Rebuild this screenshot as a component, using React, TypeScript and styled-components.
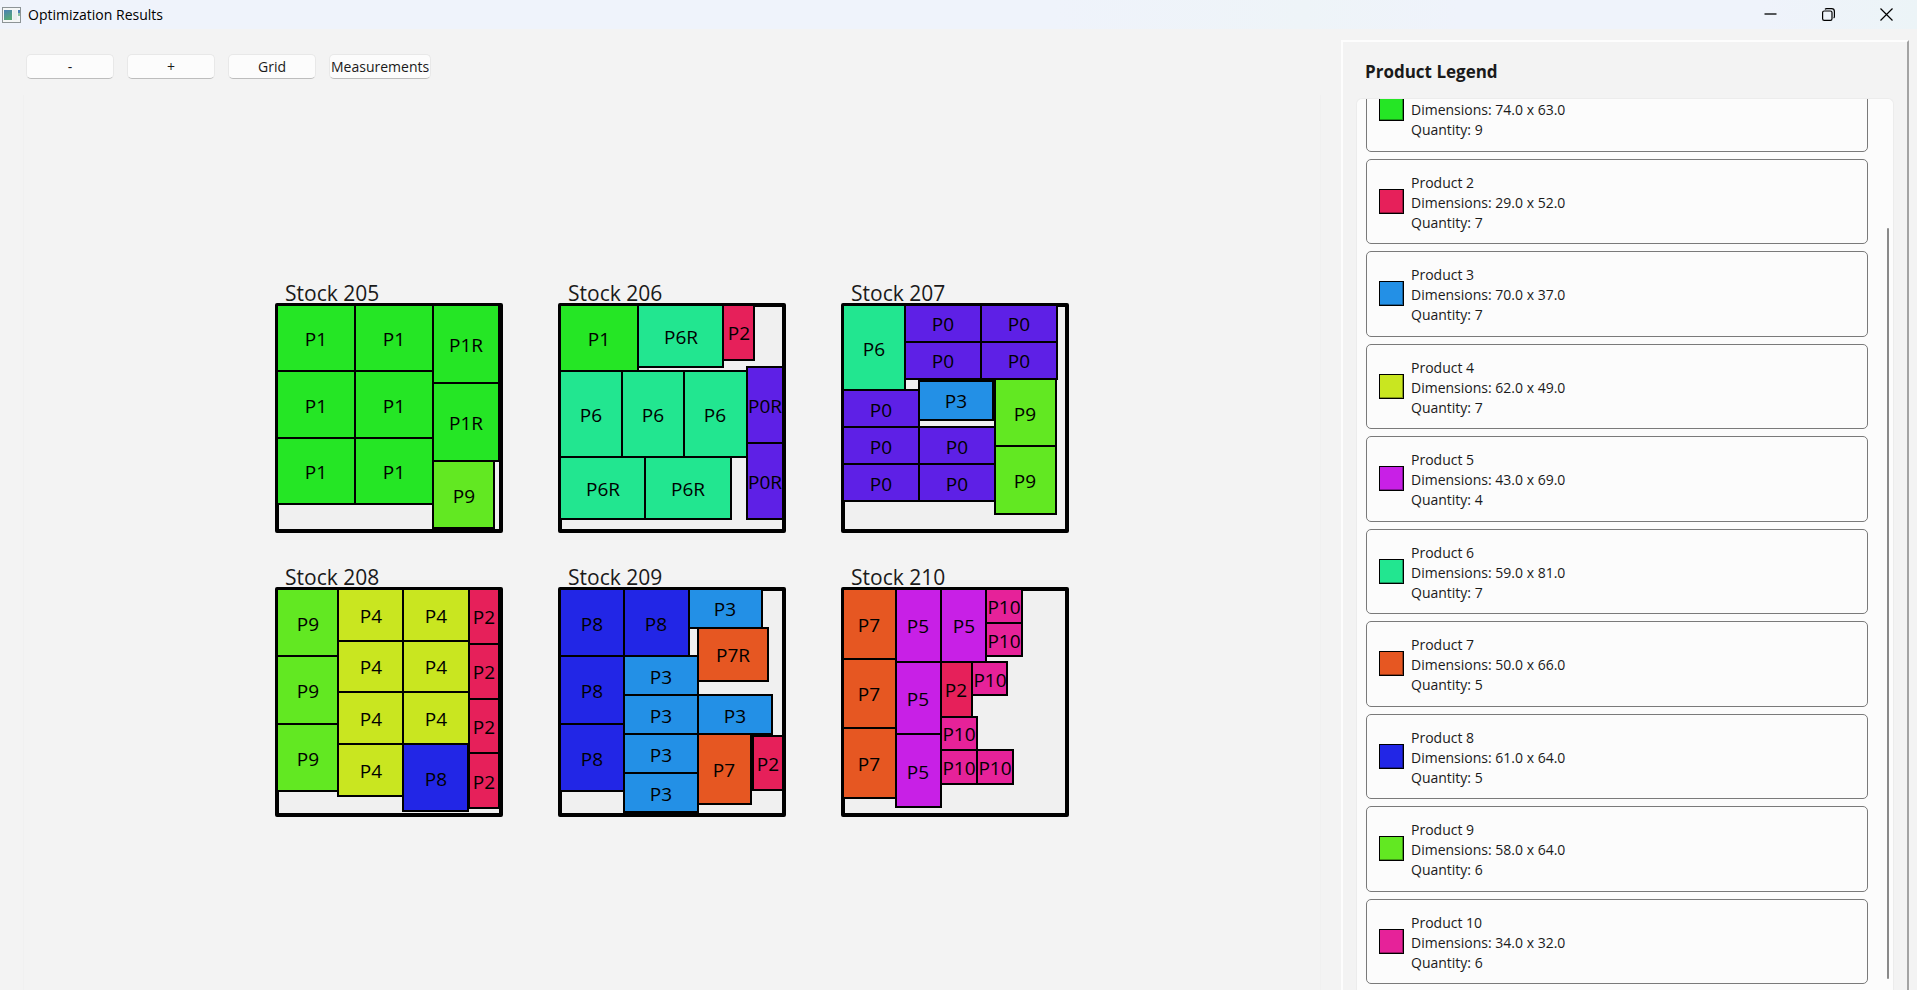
import React from "react";
import styled, { createGlobalStyle } from "styled-components";

const Global = createGlobalStyle`
  *, *::before, *::after { box-sizing: border-box; }
  body {
    margin: 0;
    background: #f3f3f3;
    color: #1a1a1a;
    font-family: "Open Sans", "Noto Sans", sans-serif;
    font-size: 14px;
  }
`;

const Window = styled.div`
  display: flex;
  flex-direction: column;
  height: 100vh;
  overflow: hidden;
`;

const TitleBar = styled.header`
  display: flex;
  align-items: center;
  flex: none;
  height: 29px;
  padding: 0 2px;
  background: linear-gradient(90deg, #eff3fb 0%, #eff3fb 55%, #eef4f8 68%, #eff3fb 76%, #eff3fb 92%, #ecf4f7 100%);
`;

const WindowTitle = styled.h1`
  flex: 1;
  margin: 0 0 0 7px;
  color: #000;
  font-size: 14px;
  font-weight: 400;
  line-height: 20px;
`;

const WindowButton = styled.button`
  display: flex;
  align-items: center;
  justify-content: center;
  width: 58px;
  height: 29px;
  padding: 0;
  border: 0;
  background: transparent;
`;

const Body = styled.div`
  display: flex;
  flex: 1;
  gap: 20px;
  min-height: 0;
  padding: 11px 8px 0 23px;
`;

const Workspace = styled.main`
  display: flex;
  flex: 1;
  flex-direction: column;
  gap: 16px;
  min-width: 0;
  padding-top: 14px;
`;

const Toolbar = styled.div`
  display: flex;
  gap: 13px;
  padding-left: 3px;
`;

const ToolButton = styled.button`
  min-width: 88px;
  height: 25px;
  padding: 1px 1px 0;
  border: 1px solid #e8e8e8;
  border-bottom-color: #bdbdbd;
  border-radius: 5px;
  background: #fcfcfc;
  color: #1a1a1a;
  font: inherit;
  line-height: 20px;
`;

const Canvas = styled.section`
  display: flex;
  flex: 1;
  align-items: center;
  justify-content: center;
  min-height: 0;
  padding-top: 4px;
  border: 1px solid #f0f0f0;
  border-width: 0 1px;
`;

const StockGrid = styled.div`
  display: grid;
  grid-template-columns: repeat(3, auto);
  gap: 28px 59px;
`;

const Stock = styled.figure`
  margin: 0;
`;

const StockName = styled.figcaption`
  height: 30px;
  padding-left: 8px;
  font-size: 21px;
  line-height: 36px;
`;

const Sheet = styled.svg`
  display: block;
  overflow: visible;
`;

const SheetOutline = styled.rect`
  fill: #f0f0f0;
  stroke: #000;
  stroke-width: 4px;
  stroke-linejoin: round;
`;

const Piece = styled.rect`
  stroke: #000;
  stroke-width: 2px;
`;

const PieceName = styled.text`
  fill: #000;
  font-size: 19px;
  text-anchor: middle;
`;

const Legend = styled.aside`
  display: flex;
  flex-direction: column;
  flex: none;
  width: 568px;
  max-width: 40%;
  padding: 18px 13px 0;
  border-top: 2px solid #fdfdfd;
  border-left: 2px solid #fdfdfd;
  border-right: 2px solid #a3a3a3;
`;

const LegendTitle = styled.h2`
  margin: 0 0 14px 9px;
  font-size: 17px;
  font-weight: 700;
  line-height: 24px;
`;

const LegendView = styled.div`
  display: flex;
  flex: 1;
  align-items: flex-end;
  gap: 19px;
  min-height: 0;
  padding: 0 4px 6px 9px;
  border: 1px solid #ececec;
  border-bottom: 0;
  border-radius: 6px 6px 0 0;
  background: #fcfcfc;
  overflow: hidden;
`;

const LegendList = styled.ul`
  display: grid;
  flex: 1;
  grid-auto-rows: 1fr;
  gap: 7px;
  min-height: 918px;
  margin: 0;
  padding: 0;
  list-style: none;
`;

const LegendCard = styled.li`
  display: flex;
  align-items: center;
  gap: 7px;
  padding: 0 12px;
  border: 1px solid #7a7a7a;
  border-radius: 5px;
`;

const Swatch = styled.span<{ $color: string }>`
  width: 25px;
  height: 25px;
  border: 1px solid #000;
  background: ${(p) => p.$color};
  box-shadow: inset -1px -1px 0 rgba(0, 0, 0, 0.35);
`;

const Details = styled.p`
  margin: 0;
  padding-top: 3px;
  line-height: 20px;
`;

const Line = styled.span<{ $scrolledOut?: boolean }>`
  display: block;
  visibility: ${(p) => (p.$scrolledOut ? "hidden" : "visible")};
`;

const ScrollThumb = styled.div`
  align-self: stretch;
  width: 2px;
  margin: 129px 0 5px;
  border-radius: 1px;
  background: #8a8a8a;
`;

const COLORS = [
  "#5e20e6", "#25e625", "#e6205a", "#2390e6", "#c9e620", "#c820e6",
  "#22e690", "#e65722", "#2226e6", "#62e822", "#e62299",
];

type Product = { id: number; w: number; h: number; qty: number };

const PRODUCTS: Product[] = [
  { id: 1, w: 74, h: 63, qty: 9 },
  { id: 2, w: 29, h: 52, qty: 7 },
  { id: 3, w: 70, h: 37, qty: 7 },
  { id: 4, w: 62, h: 49, qty: 7 },
  { id: 5, w: 43, h: 69, qty: 4 },
  { id: 6, w: 59, h: 81, qty: 7 },
  { id: 7, w: 50, h: 66, qty: 5 },
  { id: 8, w: 61, h: 64, qty: 5 },
  { id: 9, w: 58, h: 64, qty: 6 },
  { id: 10, w: 34, h: 32, qty: 6 },
];

const SIZES: Record<number, [number, number]> = { 0: [72, 35] };
PRODUCTS.forEach((p) => {
  SIZES[p.id] = [p.w, p.h];
});

// A placed piece: product, x, y, and whether it is rotated by 90 degrees.
type Placement = [number, number, number, boolean?];

const STOCKS: { id: number; pieces: Placement[] }[] = [
  {
    id: 205,
    pieces: [
      [1, 0, 0], [1, 74, 0], [1, 0, 63], [1, 74, 63], [1, 0, 126], [1, 74, 126],
      [1, 148, 0, true], [1, 148, 74, true], [9, 148, 148],
    ],
  },
  {
    id: 206,
    pieces: [
      [1, 0, 0], [6, 74, 0, true], [2, 155, 0], [6, 0, 63], [6, 59, 63], [6, 118, 63],
      [6, 0, 144, true], [6, 81, 144, true], [0, 177, 59, true], [0, 177, 131, true],
    ],
  },
  {
    id: 207,
    pieces: [
      [6, 0, 0], [0, 59, 0], [0, 131, 0], [0, 59, 35], [0, 131, 35], [3, 72, 72],
      [0, 0, 81], [0, 0, 116], [0, 0, 151], [0, 72, 116], [0, 72, 151],
      [9, 144, 70], [9, 144, 134],
    ],
  },
  {
    id: 208,
    pieces: [
      [9, 0, 0], [9, 0, 64], [9, 0, 128],
      [4, 58, 0], [4, 58, 49], [4, 58, 98], [4, 58, 147],
      [4, 120, 0], [4, 120, 49], [4, 120, 98], [8, 120, 147],
      [2, 182, 0], [2, 182, 52], [2, 182, 104], [2, 182, 156],
    ],
  },
  {
    id: 209,
    pieces: [
      [8, 0, 0], [8, 61, 0], [8, 0, 64], [8, 0, 128], [3, 122, 0], [7, 131, 37, true],
      [3, 61, 64], [3, 61, 101], [3, 61, 138], [3, 61, 175], [3, 131, 101],
      [7, 131, 138], [2, 183, 139],
    ],
  },
  {
    id: 210,
    pieces: [
      [7, 0, 0], [7, 0, 66], [7, 0, 132], [5, 50, 0], [5, 93, 0], [5, 50, 69], [5, 50, 138],
      [10, 136, 0], [10, 136, 32], [2, 93, 69], [10, 122, 69],
      [10, 93, 121], [10, 93, 153], [10, 127, 153],
    ],
  },
];

const SCALE = 1.054;
const SHEET_WIDTH = 224;
const SHEET_HEIGHT = 226;
const px = (n: number) => Math.round(n * SCALE);

function StockSheet({ id, pieces }: { id: number; pieces: Placement[] }) {
  return (
    <Stock>
      <StockName>Stock {id}</StockName>
      <Sheet width={SHEET_WIDTH} height={SHEET_HEIGHT}>
        <SheetOutline width={SHEET_WIDTH} height={SHEET_HEIGHT} />
        {pieces.map(([product, x, y, rotated], i) => {
          const [a, b] = SIZES[product];
          const w = rotated ? b : a;
          const h = rotated ? a : b;
          return (
            <g key={i}>
              <Piece
                x={px(x)}
                y={px(y)}
                width={px(x + w) - px(x)}
                height={px(y + h) - px(y)}
                fill={COLORS[product]}
              />
              <PieceName x={px(x + w / 2)} y={px(y + h / 2) + 8}>
                {`P${product}${rotated ? "R" : ""}`}
              </PieceName>
            </g>
          );
        })}
      </Sheet>
    </Stock>
  );
}

function AppIcon() {
  return (
    <svg width="19" height="16" viewBox="0 0 19 16" aria-hidden="true">
      <defs>
        <linearGradient id="pane" x1="0" y1="0" x2="0.4" y2="1">
          <stop offset="0" stopColor="#4a7fb5" />
          <stop offset="1" stopColor="#55a878" />
        </linearGradient>
      </defs>
      <rect x="0.5" y="0.5" width="18" height="15" fill="#f4f6f6" stroke="#8d9496" />
      <rect x="2" y="3" width="8" height="10" fill="url(#pane)" />
      <rect x="11" y="3" width="4" height="10" fill="#e9eeee" />
      <rect x="16" y="3" width="2" height="3" fill="#4a7fb5" />
      <rect x="16" y="6" width="2" height="3" fill="#8fc3a5" />
    </svg>
  );
}

export default function App() {
  return (
    <Window>
      <Global />
      <TitleBar>
        <AppIcon />
        <WindowTitle>Optimization Results</WindowTitle>
        <WindowButton aria-label="Minimize">
          <svg width="13" height="13" viewBox="0 0 13 13">
            <path d="M0.5 6h12" stroke="#000" strokeWidth="1.3" />
          </svg>
        </WindowButton>
        <WindowButton aria-label="Restore">
          <svg width="13" height="13" viewBox="0 0 13 13" fill="none" stroke="#000" strokeWidth="1.2">
            <rect x="0.6" y="3" width="9.4" height="9.4" rx="1.6" />
            <path d="M3 1.3C3.4 0.8 3.9 0.6 4.6 0.6H9.6a2.8 2.8 0 0 1 2.8 2.8V8.4c0 .7-.2 1.2-.8 1.6" />
          </svg>
        </WindowButton>
        <WindowButton aria-label="Close">
          <svg width="13" height="13" viewBox="0 0 13 13">
            <path d="M0.5 0.5l12 12M12.5 0.5l-12 12" stroke="#000" strokeWidth="1.2" />
          </svg>
        </WindowButton>
      </TitleBar>
      <Body>
        <Workspace>
          <Toolbar>
            <ToolButton>-</ToolButton>
            <ToolButton>+</ToolButton>
            <ToolButton>Grid</ToolButton>
            <ToolButton>Measurements</ToolButton>
          </Toolbar>
          <Canvas>
            <StockGrid>
              {STOCKS.map((s) => (
                <StockSheet key={s.id} id={s.id} pieces={s.pieces} />
              ))}
            </StockGrid>
          </Canvas>
        </Workspace>
        <Legend>
          <LegendTitle>Product Legend</LegendTitle>
          <LegendView>
            <LegendList>
              {PRODUCTS.map((p, i) => (
                <LegendCard key={p.id}>
                  <Swatch $color={COLORS[p.id]} />
                  <Details>
                    <Line $scrolledOut={i === 0}>Product {p.id}</Line>
                    <Line>
                      Dimensions: {p.w.toFixed(1)} x {p.h.toFixed(1)}
                    </Line>
                    <Line>Quantity: {p.qty}</Line>
                  </Details>
                </LegendCard>
              ))}
            </LegendList>
            <ScrollThumb />
          </LegendView>
        </Legend>
      </Body>
    </Window>
  );
}
